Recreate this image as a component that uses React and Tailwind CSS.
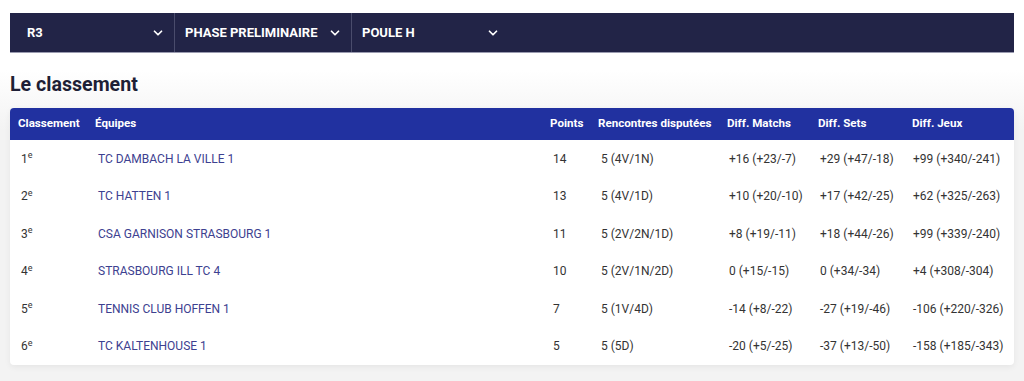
import React from "react";

const Chevron = () => (
  <svg width="14" height="14" viewBox="0 0 24 24" fill="none" stroke="currentColor" strokeWidth="3" strokeLinecap="round" strokeLinejoin="round">
    <polyline points="6 9 12 15 18 9" />
  </svg>
);

const rows = [
  ["1", "TC DAMBACH LA VILLE 1", "14", "5 (4V/1N)", "+16 (+23/-7)", "+29 (+47/-18)", "+99 (+340/-241)"],
  ["2", "TC HATTEN 1", "13", "5 (4V/1D)", "+10 (+20/-10)", "+17 (+42/-25)", "+62 (+325/-263)"],
  ["3", "CSA GARNISON STRASBOURG 1", "11", "5 (2V/2N/1D)", "+8 (+19/-11)", "+18 (+44/-26)", "+99 (+339/-240)"],
  ["4", "STRASBOURG ILL TC 4", "10", "5 (2V/1N/2D)", "0 (+15/-15)", "0 (+34/-34)", "+4 (+308/-304)"],
  ["5", "TENNIS CLUB HOFFEN 1", "7", "5 (1V/4D)", "-14 (+8/-22)", "-27 (+19/-46)", "-106 (+220/-326)"],
  ["6", "TC KALTENHOUSE 1", "5", "5 (5D)", "-20 (+5/-25)", "-37 (+13/-50)", "-158 (+185/-343)"],
];

const widths = ["w-[77px]", "w-[455px]", "w-[48px]", "w-[129px]", "w-[91px]", "w-[94px]", ""];
const headers = ["Classement", "Équipes", "Points", "Rencontres disputées", "Diff. Matchs", "Diff. Sets", "Diff. Jeux"];

export default function App() {
  return (
    <div className="min-h-[381px] bg-[linear-gradient(to_bottom,#ffffff_70px,#f3f3f3_130px)] px-[10px] pt-[13px] pb-4 font-['Roboto',sans-serif]">
      {/* selects */}
      <div className="flex h-[40px] bg-[#222447] border-b border-[#9a9bb0] text-white text-[13px] font-bold">
        <div className="w-[165px] flex items-center justify-between pl-[17px] pr-[9px] border-r border-[#4a4c6c]">
          <span>R3</span>
          <Chevron />
        </div>
        <div className="w-[177px] flex items-center justify-between pl-[10px] pr-[9px] border-r border-[#4a4c6c]">
          <span>PHASE PRELIMINAIRE</span>
          <Chevron />
        </div>
        <div className="w-[157px] flex items-center justify-between pl-[10px] pr-[9px]">
          <span>POULE H</span>
          <Chevron />
        </div>
      </div>

      <h2 className="mt-[20px] text-[19.6px] font-bold text-[#1e1f36] leading-[24px]">Le classement</h2>

      <div className="mt-[11px] bg-white rounded-[4px] shadow-[0_2px_6px_rgba(0,0,0,0.06)] overflow-hidden">
        <table className="w-full table-fixed border-collapse text-[12px]">
          <thead>
            <tr className="bg-[#2131a0] text-white h-[32px] text-[11.6px]">
              {headers.map((h, i) => (
                <th key={h} className={`${widths[i]} text-left font-bold pl-2 whitespace-nowrap`}>
                  {h}
                </th>
              ))}
            </tr>
          </thead>
          <tbody className="text-[#333]">
            {rows.map((r) => (
              <tr key={r[0]} className="h-[37.5px]">
                <td className="pl-[11px]">
                  {r[0]}
                  <sup className="text-[9px]">e</sup>
                </td>
                <td className="pl-[11px] text-[#3d4190]">{r[1]}</td>
                <td className="pl-[11px]">{r[2]}</td>
                <td className="pl-[11px]">{r[3]}</td>
                <td className="pl-[10px] whitespace-nowrap">{r[4]}</td>
                <td className="pl-[10px] whitespace-nowrap">{r[5]}</td>
                <td className="pl-[9px] whitespace-nowrap">{r[6]}</td>
              </tr>
            ))}
          </tbody>
        </table>
      </div>
    </div>
  );
}
